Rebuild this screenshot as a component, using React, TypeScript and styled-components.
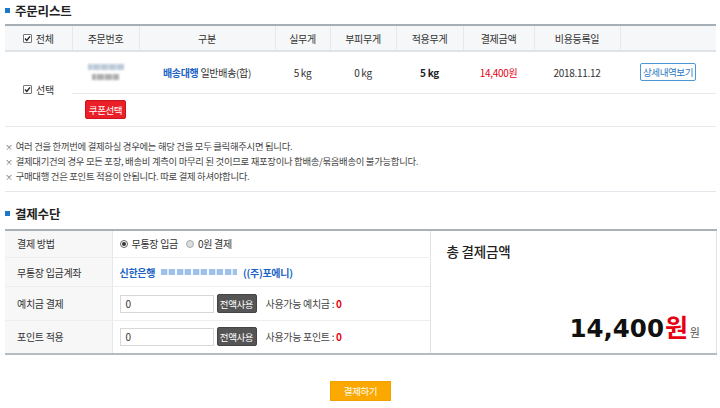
import React from "react";
import styled, { createGlobalStyle } from "styled-components";

const Global = createGlobalStyle`
  html, body { margin: 0; padding: 0; background: #fff; }
  body {
    font-family: "Noto Sans CJK KR", "Noto Sans", sans-serif;
    color: #333;
    font-size: 10px;
    letter-spacing: -0.3px;
  }
  * { box-sizing: border-box; }
`;

const Page = styled.div`
  width: 720px;
  padding: 0 4px 0 5px;
  display: flex;
  flex-direction: column;
`;

const SectionTitle = styled.h2<{ $mt?: number }>`
  margin: ${(p) => p.$mt ?? 0}px 0 0 0;
  height: 20px;
  display: flex;
  align-items: center;
  gap: 5px;
  font-size: 12.5px;
  font-weight: 700;
  color: #222;
  letter-spacing: -0.2px;
`;

const Square = styled.span`
  width: 5px;
  height: 5px;
  background: #1c78c8;
  display: inline-block;
`;

const OrderTable = styled.table`
  margin-top: 4px;
  width: 711px;
  border-collapse: collapse;
  table-layout: fixed;
  border-top: 2px solid #a6aeb6;
`;

const Th = styled.th<{ $w: number }>`
  width: ${(p) => p.$w}px;
  height: 26px;
  background: #f6f7f8;
  border-right: 1px solid #e4e7eb;
  border-bottom: 2px solid #dfe2e6;
  font-weight: 400;
  font-size: 10px;
  color: #333;
  padding: 0;
  &:last-child { border-right: none; }
`;

const Td = styled.td<{ $h?: number; $align?: string }>`
  height: ${(p) => p.$h ?? 42}px;
  border-bottom: 1px solid #e6e9ee;
  text-align: ${(p) => p.$align ?? "center"};
  padding: 0;
  font-size: 10px;
  color: #333;
  vertical-align: middle;
`;

const CheckLabel = styled.span`
  display: inline-flex;
  align-items: center;
  gap: 4px;
  font-size: 10px;
  color: #333;
`;

const Box = styled.span`
  width: 9px;
  height: 9px;
  border: 1px solid #777;
  border-radius: 1px;
  background: #fff;
  display: inline-flex;
  align-items: center;
  justify-content: center;
`;

const CellStack = styled.div`
  display: flex;
  flex-direction: column;
  align-items: center;
  gap: 4px;
`;

const Blur = styled.span<{ $w: number; $c: string }>`
  display: block;
  width: ${(p) => p.$w}px;
  height: 6px;
  background: repeating-linear-gradient(
    90deg,
    ${(p) => p.$c} 0 4px,
    #e8ecf0 4px 5px,
    ${(p) => p.$c} 5px 8px
  );
  filter: blur(0.8px);
  opacity: 0.8;
`;

const Blue = styled.span`
  color: #1a63c4;
  font-weight: 700;
`;

const Red = styled.span`
  color: #e60012;
`;

const Bold = styled.span`
  font-weight: 700;
  color: #222;
`;

const DetailBtn = styled.button`
  width: 56px;
  height: 18px;
  border: 1px solid #4a96d6;
  border-radius: 2px;
  background: #fff;
  color: #2a78c0;
  font-family: inherit;
  font-size: 9.5px;
  letter-spacing: -0.4px;
  padding: 0;
`;

const CouponBtn = styled.button`
  width: 41px;
  height: 19px;
  border: 1px solid #c8141c;
  border-radius: 2px;
  background: #ea1f27;
  color: #fff;
  font-family: inherit;
  font-size: 9.5px;
  letter-spacing: -0.4px;
  padding: 0;
`;

const Notes = styled.ul`
  list-style: none;
  margin: 12px 0 0 0;
  padding: 0 0 7px 0;
  border-bottom: 1px solid #e3e7ec;
  display: flex;
  flex-direction: column;
`;

const Note = styled.li`
  height: 15px;
  line-height: 15px;
  font-size: 9.4px;
  color: #444;
  letter-spacing: -0.3px;
  &::before {
    content: "×";
    font-size: 8px;
    color: #666;
    margin-right: 3px;
  }
`;

const PayTable = styled.table`
  margin-top: 5px;
  width: 711px;
  border-collapse: collapse;
  table-layout: fixed;
  border-top: 2px solid #a9b1b9;
  border-bottom: 2px solid #b3bbc3;
`;

const LabelCell = styled.td<{ $h: number }>`
  width: 107px;
  height: ${(p) => p.$h}px;
  background: #f7f7f7;
  padding: 0 0 0 12px;
  border-bottom: 1px solid #eceff2;
  border-right: 1px solid #e4e7eb;
  font-size: 10px;
  color: #333;
  tr:last-child > & { border-bottom: none; }
`;

const ValueCell = styled.td`
  width: 318px;
  padding: 0 0 0 7px;
  border-bottom: 1px solid #eceff2;
  font-size: 10px;
  color: #333;
  tr:last-child > & { border-bottom: none; }
`;

const TotalCell = styled.td`
  width: 286px;
  vertical-align: top;
  padding: 0;
  border-left: 1px solid #e0e4ea;
  border-right: 1px solid #e0e4ea;
`;

const TotalPanel = styled.div`
  height: 122px;
  padding: 12px 16px 11px 16px;
  display: flex;
  flex-direction: column;
  justify-content: space-between;
`;

const TotalTitle = styled.div`
  font-size: 13.5px;
  font-weight: 500;
  color: #222;
  letter-spacing: -0.2px;
  line-height: 16px;
`;

const Amount = styled.div`
  display: flex;
  justify-content: flex-end;
  align-items: baseline;
  line-height: 1;
`;

const AmountNum = styled.span`
  font-family: "DejaVu Sans", sans-serif;
  font-weight: 700;
  font-size: 24.5px;
  color: #111;
  letter-spacing: 0;
`;

const AmountWon = styled.span`
  font-weight: 700;
  font-size: 25px;
  color: #e60012;
  margin-left: 1px;
`;

const AmountUnit = styled.span`
  font-size: 11px;
  color: #555;
  margin-left: 2px;
`;

const Row = styled.div`
  display: flex;
  align-items: center;
  gap: 4px;
`;

const RadioDot = styled.span<{ $on?: boolean }>`
  width: 8px;
  height: 8px;
  border-radius: 50%;
  border: 1px solid ${(p) => (p.$on ? "#666" : "#aaa")};
  background: ${(p) => (p.$on ? "#fff" : "#ddd")};
  display: inline-flex;
  align-items: center;
  justify-content: center;
  &::after {
    content: "";
    width: 4px;
    height: 4px;
    border-radius: 50%;
    background: ${(p) => (p.$on ? "#333" : "transparent")};
  }
`;

const RadioLabel = styled.span`
  margin-right: 4px;
`;

const Input = styled.div`
  width: 94px;
  height: 18px;
  border: 1px solid #d8d8d8;
  padding-left: 5px;
  display: flex;
  align-items: center;
  font-size: 10px;
  color: #333;
`;

const UseAllBtn = styled.button`
  width: 40px;
  height: 19px;
  border: 1px solid #444;
  border-radius: 2px;
  background: #555;
  color: #fff;
  font-family: inherit;
  font-size: 9.5px;
  letter-spacing: -0.4px;
  padding: 0;
  margin-left: -1px;
`;

const Avail = styled.span`
  margin-left: 5px;
  color: #444;
`;

const Zero = styled.span`
  color: #e60012;
  font-weight: 700;
`;

const BlurAcct = styled.span`
  width: 76px;
  height: 6px;
  margin: 0 2px;
  background: repeating-linear-gradient(
    90deg,
    #7eaee6 0 6px,
    #d6e4f5 6px 8px,
    #7eaee6 8px 14px,
    #ffffff 14px 16px
  );
  filter: blur(0.7px);
  opacity: 0.75;
`;

const Footer = styled.div`
  margin-top: 26px;
  display: flex;
  justify-content: center;
`;

const PayBtn = styled.button`
  width: 61px;
  height: 20px;
  background: #fba800;
  border: 1px solid #f2a000;
  color: #fff;
  font-family: inherit;
  font-size: 9.5px;
  letter-spacing: -0.4px;
  padding: 0;
`;

const Check = () => (
  <Box>
    <svg width="7" height="7" viewBox="0 0 7 7">
      <path d="M1 3.6 L2.8 5.4 L6 1.4" fill="none" stroke="#222" strokeWidth="1.4" />
    </svg>
  </Box>
);

const cols = [
  { w: 67, t: "전체" },
  { w: 67, t: "주문번호" },
  { w: 136, t: "구분" },
  { w: 55, t: "실무게" },
  { w: 66, t: "부피무게" },
  { w: 67, t: "적용무게" },
  { w: 71, t: "결제금액" },
  { w: 86, t: "비용등록일" },
  { w: 96, t: "" },
];

export default function App() {
  return (
    <>
      <Global />
      <Page>
        <SectionTitle>
          <Square />
          주문리스트
        </SectionTitle>
        <OrderTable>
          <thead>
            <tr>
              {cols.map((c, i) => (
                <Th key={i} $w={c.w}>
                  {i === 0 ? (
                    <CheckLabel>
                      <Check />
                      {c.t}
                    </CheckLabel>
                  ) : (
                    c.t
                  )}
                </Th>
              ))}
            </tr>
          </thead>
          <tbody>
            <tr>
              <Td rowSpan={2}>
                <CheckLabel>
                  <Check />
                  선택
                </CheckLabel>
              </Td>
              <Td>
                <CellStack>
                  <Blur $w={36} $c="#a9bccf" />
                  <Blur $w={27} $c="#9a9a9a" />
                </CellStack>
              </Td>
              <Td>
                <Blue>배송대행</Blue> 일반배송(합)
              </Td>
              <Td>5 kg</Td>
              <Td>0 kg</Td>
              <Td>
                <Bold>5 kg</Bold>
              </Td>
              <Td>
                <Red>14,400원</Red>
              </Td>
              <Td>2018.11.12</Td>
              <Td>
                <DetailBtn>상세내역보기</DetailBtn>
              </Td>
            </tr>
            <tr>
              <Td $h={33}>
                <CouponBtn>쿠폰선택</CouponBtn>
              </Td>
              <Td $h={33} colSpan={7} />
            </tr>
          </tbody>
        </OrderTable>

        <Notes>
          <Note>여러 건을 한꺼번에 결제하실 경우에는 해당 건을 모두 클릭해주시면 됩니다.</Note>
          <Note>결제대기건의 경우 모든 포장, 배송비 계측이 마무리 된 것이므로 재포장이나 합배송/묶음배송이 불가능합니다.</Note>
          <Note>구매대행 건은 포인트 적용이 안됩니다. 따로 결제 하셔야합니다.</Note>
        </Notes>

        <SectionTitle $mt={12}>
          <Square />
          결제수단
        </SectionTitle>

        <PayTable>
          <tbody>
            <tr>
              <LabelCell $h={28}>결제 방법</LabelCell>
              <ValueCell>
                <Row>
                  <RadioDot $on />
                  <RadioLabel>무통장 입금</RadioLabel>
                  <RadioDot />
                  <RadioLabel>0원 결제</RadioLabel>
                </Row>
              </ValueCell>
              <TotalCell rowSpan={4}>
                <TotalPanel>
                  <TotalTitle>총 결제금액</TotalTitle>
                  <Amount>
                    <AmountNum>14,400</AmountNum>
                    <AmountWon>원</AmountWon>
                    <AmountUnit>원</AmountUnit>
                  </Amount>
                </TotalPanel>
              </TotalCell>
            </tr>
            <tr>
              <LabelCell $h={29}>무통장 입금계좌</LabelCell>
              <ValueCell>
                <Row>
                  <Blue>신한은행</Blue>
                  <BlurAcct />
                  <Blue>((주)포에니)</Blue>
                </Row>
              </ValueCell>
            </tr>
            <tr>
              <LabelCell $h={34}>예치금 결제</LabelCell>
              <ValueCell>
                <Row>
                  <Input>0</Input>
                  <UseAllBtn>전액사용</UseAllBtn>
                  <Avail>
                    사용가능 예치금 : <Zero>0</Zero>
                  </Avail>
                </Row>
              </ValueCell>
            </tr>
            <tr>
              <LabelCell $h={33}>포인트 적용</LabelCell>
              <ValueCell>
                <Row>
                  <Input>0</Input>
                  <UseAllBtn>전액사용</UseAllBtn>
                  <Avail>
                    사용가능 포인트 : <Zero>0</Zero>
                  </Avail>
                </Row>
              </ValueCell>
            </tr>
          </tbody>
        </PayTable>

        <Footer>
          <PayBtn>결제하기</PayBtn>
        </Footer>
      </Page>
    </>
  );
}
